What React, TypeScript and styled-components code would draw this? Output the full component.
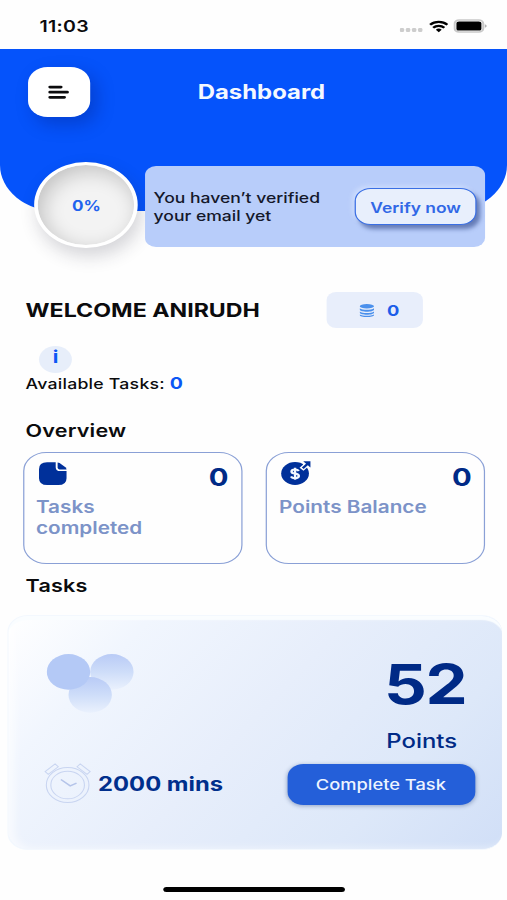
import React from "react";
import styled, { createGlobalStyle } from "styled-components";

const GlobalStyle = createGlobalStyle`
  *, *::before, *::after { box-sizing: border-box; }
  html, body { margin: 0; padding: 0; background: #fefefe; overflow: hidden; }
`;

const Screen = styled.main`
  width: 416px;
  height: 900px;
  transform: scaleX(1.21875);
  transform-origin: 0 0;
  display: flex;
  flex-direction: column;
  overflow: hidden;
  background: #fefefe;
  color: #0b0b0d;
  font-family: Inter, "Liberation Sans", sans-serif;
`;

const StatusBar = styled.div`
  flex: none;
  height: 49px;
  padding: 3px 16.5px 0 32.5px;
  display: flex;
  align-items: center;
  justify-content: space-between;
`;

const Time = styled.span`
  font-size: 16px;
  font-weight: 600;
  letter-spacing: 0.2px;
`;

const StatusIcons = styled.div`
  display: flex;
  align-items: center;
  gap: 4px;
`;

const Header = styled.header`
  flex: none;
  height: 162px;
  padding: 18px 18px 0 23px;
  border-radius: 0 0 46px 46px;
  background: #0553fb;
`;

const TopRow = styled.div`
  display: grid;
  grid-template-columns: 51px 1fr 51px;
  align-items: center;
  height: 50px;
`;

const MenuButton = styled.button`
  width: 51px;
  height: 50px;
  padding: 0 1px 0 0;
  border: 0;
  border-radius: 16px;
  background: #fff;
  display: flex;
  align-items: center;
  justify-content: center;
  box-shadow: 5px 7px 16px rgba(0, 20, 110, 0.3);
`;

const Title = styled.h1`
  margin: 0;
  padding: 0 0 1px 8px;
  text-align: center;
  color: #f4f8ff;
  font-size: 19.6px;
  line-height: 24px;
  font-weight: 700;
`;

const VerifyRow = styled.div`
  display: flex;
  align-items: center;
  gap: 6px;
  margin: 45px 0 0 5px;
`;

const Progress = styled.div`
  flex: none;
  width: 85px;
  height: 86px;
  padding-left: 1px;
  border: 3.5px solid #fff;
  border-radius: 50%;
  display: flex;
  align-items: center;
  justify-content: center;
  background: #f3f3f3;
  box-shadow: 3px 8px 16px rgba(40, 40, 60, 0.2), inset 4px 6px 18px rgba(0, 0, 0, 0.2);
  color: #1f62ee;
  font-size: 14px;
  font-weight: 700;
`;

const Banner = styled.div`
  width: 279px;
  height: 81px;
  margin-top: 2px;
  padding: 1px 7px 0;
  border-radius: 9px;
  background: #b8cdfa;
  display: flex;
  align-items: center;
  justify-content: space-between;
`;

const BannerText = styled.p`
  margin: 0;
  color: #14182a;
  font-size: 14.4px;
  line-height: 17.5px;
  font-weight: 500;
  white-space: nowrap;
`;

const VerifyButton = styled.button`
  width: 100px;
  height: 37px;
  padding: 1px 0 0;
  border: 1px solid #3a6fe4;
  border-radius: 13px;
  background: #e8effc;
  color: #3168e6;
  font: 600 14.3px Inter, sans-serif;
  white-space: nowrap;
  box-shadow: 3px 4px 4px rgba(50, 75, 140, 0.62), -2px -2px 5px rgba(220, 232, 255, 0.6);
`;

const WelcomeRow = styled.section`
  flex: none;
  height: 36px;
  margin-top: 81px;
  padding: 0 69px 0 21px;
  display: flex;
  align-items: center;
  justify-content: space-between;
`;

const Welcome = styled.h2`
  margin: 0;
  padding-top: 1px;
  font-size: 19px;
  line-height: 24px;
  font-weight: 700;
  white-space: nowrap;
`;

const CoinChip = styled.div`
  width: 79px;
  height: 36px;
  padding-left: 8px;
  border-radius: 8px;
  background: #e8eefb;
  color: #1c5de9;
  display: flex;
  align-items: center;
  justify-content: center;
  gap: 10px;
  font-size: 15px;
  font-weight: 700;
`;

const InfoBadge = styled.div`
  flex: none;
  width: 27px;
  height: 27px;
  margin: 18px 0 0 32px;
  border-radius: 50%;
  background: #e7eefa;
  color: #0c57f5;
  text-align: center;
  font-size: 17px;
  line-height: 22px;
  font-weight: 700;
`;

const Available = styled.p`
  flex: none;
  margin: 0 0 0 21px;
  height: 20px;
  font-size: 14.5px;
  line-height: 20px;
  font-weight: 500;
  letter-spacing: 0.2px;
`;

const AvailableCount = styled.b`
  color: #0c57f5;
  font-size: 16px;
  font-weight: 700;
`;

const SectionTitle = styled.h3<{ $gap: number }>`
  flex: none;
  margin: ${(p) => p.$gap}px 0 0 21px;
  font-size: 17.7px;
  line-height: 22px;
  font-weight: 600;
  letter-spacing: 0.15px;
`;

const Overview = styled.section`
  flex: none;
  display: grid;
  grid-template-columns: 180px 180px;
  gap: 19.5px;
  margin: 10px 0 0 18.5px;
`;

const StatCard = styled.article`
  height: 112px;
  padding: 9px 10px 0 10px;
  border: 1px solid #8aa0d6;
  border-radius: 19px;
`;

const StatTop = styled.div`
  display: flex;
  align-items: flex-start;
  justify-content: space-between;
  height: 35px;
`;

const StatValue = styled.strong`
  color: #002a86;
  font-size: 24px;
  line-height: 32px;
  font-weight: 700;
`;

const StatLabel = styled.p`
  margin: 0;
  width: 125px;
  color: #7c93c8;
  font-size: 17px;
  line-height: 21px;
  font-weight: 600;
`;

const TaskCard = styled.section`
  flex: none;
  width: 406px;
  height: 235px;
  margin: 18px 0 0 6px;
  padding: 31px 22px 0 31px;
  border: 1px solid #f3f8fe;
  border-width: 1px 0 1px 1px;
  border-radius: 17px;
  background: linear-gradient(128deg, #ffffff 0%, #f1f6fe 20%, #e7eefb 48%, #dde8f9 76%, #d1dff7 100%);
  box-shadow: inset 0 5px 1px -1px #fafdff, inset 5px 0 8px rgba(255, 255, 255, 0.6);
`;

const TaskTop = styled.div`
  height: 117px;
  display: flex;
  justify-content: space-between;
`;

const TaskBottom = styled.div`
  display: flex;
  align-items: center;
  justify-content: space-between;
  height: 41px;
`;

const Score = styled.div`
  width: 73px;
  color: #002a86;
`;

const ScoreValue = styled.div`
  margin-left: -2px;
  font-size: 55px;
  line-height: 74px;
  font-weight: 700;
  letter-spacing: -1px;
`;

const ScoreUnit = styled.div`
  font-size: 19.6px;
  line-height: 40px;
  font-weight: 500;
`;

const Duration = styled.div`
  display: flex;
  align-items: center;
  gap: 6px;
  margin: -2px 0 0 -2.5px;
  color: #002f8c;
  font-size: 19.5px;
  font-weight: 700;
  white-space: nowrap;
`;

const CompleteButton = styled.button`
  width: 154px;
  height: 41px;
  padding: 0 1px 0 0;
  border: 0;
  border-radius: 13px;
  background: #245fd9;
  color: #edf4ff;
  font: 500 15px Inter, sans-serif;
  box-shadow: 0 1px 4px rgba(30, 60, 120, 0.4);
`;

const HomeIndicator = styled.div`
  flex: none;
  width: 149px;
  height: 5px;
  margin: 37px 0 0 134px;
  border-radius: 3px;
  background: #000;
`;

const SignalIcon = () => (
  <svg width="19" height="5" viewBox="0 0 19 5" fill="#cdcdcd" transform="translate(-1 3)">
    {[0, 5, 10, 15].map((x) => (
      <rect key={x} x={x} y="1" width="3.6" height="4" rx="1.2" />
    ))}
  </svg>
);

const WifiIcon = () => (
  <svg width="16" height="13" viewBox="0 0 16 13" fill="none" stroke="#000" strokeWidth="2.1">
    <path d="M.9 4.8a10.2 10.2 0 0 1 14.2 0M3.4 7.7a6.6 6.6 0 0 1 9.2 0" />
    <path d="M5.6 9.7a3.5 3.5 0 0 1 4.8 0L8 12.2z" fill="#000" stroke="none" />
  </svg>
);

const BatteryIcon = () => (
  <svg width="28" height="14" viewBox="0 0 28 14">
    <rect x="1" y="1" width="23.5" height="12" rx="3.6" fill="#fff" stroke="#c9c9c9" strokeWidth="1.7" />
    <rect x="2.5" y="2.4" width="20.5" height="9.2" rx="2.2" fill="#000" />
    <path d="M25.8 5.2q1.6.5 1.6 1.8t-1.6 1.8z" fill="#b4b4b4" />
  </svg>
);

const MenuIcon = () => (
  <svg width="18" height="14" viewBox="0 0 18 14" stroke="#0b0b0d" strokeWidth="2.7" strokeLinecap="round">
    <path d="M2 2.1h9M2 7.2h14.2M2 12.3h11.8" />
  </svg>
);

const CoinsIcon = () => (
  <svg width="12" height="13" viewBox="0 0 12 13" fill="#4b90ec">
    <ellipse cx="6" cy="2.3" rx="5.9" ry="2.2" />
    <path d="M.1 4.3C2.5 6.3 9.5 6.3 11.9 4.3v1.3c0 3-11.8 3-11.8 0z" />
    <path d="M.1 7.4C2.5 9.4 9.5 9.4 11.9 7.4v1.2c0 3-11.8 3-11.8 0z" />
    <path d="M.1 10.4C2.5 12.2 9.5 12.2 11.9 10.4v.5c0 2.8-11.8 2.8-11.8 0z" />
  </svg>
);

const NoteIcon = () => (
  <svg width="28" height="26" viewBox="0 0 28 26" fill="#00309a">
    <path d="M8.6.3h7.1v4.9q0 3.9 3.9 3.9h5v7.1q0 6.9-6.8 6.9H8.8q-6.8 0-6.8-6.9V7.2Q2 .3 8.6.3z" />
    <path d="M17.3.4q.9.1 1.6.7l4.8 4.2q.8.8.9 2.2h-4.8q-2.5 0-2.5-2.3z" />
  </svg>
);

const PointsIcon = () => (
  <svg width="28" height="26" viewBox="0 0 28 26" overflow="visible">
    <circle cx="13.1" cy="11.5" r="11.4" fill="#00309a" />
    <path d="M18.4 7.2l6.2-6.6M19.6.3h5.2v5.4" fill="none" stroke="#fdfeff" strokeWidth="4.4" />
    <path d="M19.4 6.2l5-5.4" fill="none" stroke="#00309a" strokeWidth="2" />
    <path d="M19.8-.8h5.9v6.2z" fill="#00309a" />
    <path
      d="M16.2 9q-1-1.6-3.1-1.6-2.9 0-2.9 2 0 1.8 2.9 2.2 3.1.5 3.1 2.5 0 2.1-3.1 2.1-2.4 0-3.4-1.8M13.1 5.7v12"
      fill="none"
      stroke="#f2f7ff"
      strokeWidth="2"
    />
  </svg>
);

const Bubbles = () => (
  <svg width="73" height="66" viewBox="0 0 73 66">
    <defs>
      <linearGradient id="bubble" x1="0" y1="0" x2="0" y2="1">
        <stop offset="0" stopColor="#b9cbf6" />
        <stop offset="0.5" stopColor="#ceddf9" />
        <stop offset="1" stopColor="#eaf1fd" />
      </linearGradient>
    </defs>
    <circle cx="53.8" cy="24.9" r="17.8" fill="url(#bubble)" />
    <circle cx="36" cy="47.9" r="17.8" fill="url(#bubble)" />
    <circle cx="18.2" cy="24.9" r="17.8" fill="#b4c9f6" />
  </svg>
);

const ClockIcon = () => (
  <svg width="39" height="41" viewBox="0 0 39 41" fill="none" stroke="#c9d5f1" strokeWidth="0.9">
    <circle cx="19.5" cy="22" r="17.5" />
    <circle cx="19.5" cy="22" r="13.8" />
    <path d="M1 8.6 9.2 1l2.6 2.8-8.2 7.6zM27.2 3.8 29.8 1 38 8.6l-2.6 2.8z" />
    <path d="M14 16.5l7.6 6.3 5.2-2.6" stroke="#b5c4e9" strokeWidth="1.4" />
  </svg>
);

export default function App() {
  return (
    <>
      <GlobalStyle />
      <Screen>
        <StatusBar>
          <Time>11:03</Time>
          <StatusIcons>
            <SignalIcon />
            <WifiIcon />
            <BatteryIcon />
          </StatusIcons>
        </StatusBar>

        <Header>
          <TopRow>
            <MenuButton aria-label="Menu">
              <MenuIcon />
            </MenuButton>
            <Title>Dashboard</Title>
          </TopRow>
          <VerifyRow>
            <Progress>0%</Progress>
            <Banner>
              <BannerText>
                You haven’t verified
                <br />
                your email yet
              </BannerText>
              <VerifyButton>Verify now</VerifyButton>
            </Banner>
          </VerifyRow>
        </Header>

        <WelcomeRow>
          <Welcome>WELCOME ANIRUDH</Welcome>
          <CoinChip>
            <CoinsIcon />
            <span>0</span>
          </CoinChip>
        </WelcomeRow>

        <InfoBadge>i</InfoBadge>
        <Available>
          Available Tasks: <AvailableCount>0</AvailableCount>
        </Available>

        <SectionTitle $gap={27}>Overview</SectionTitle>
        <Overview>
          <StatCard>
            <StatTop>
              <NoteIcon />
              <StatValue>0</StatValue>
            </StatTop>
            <StatLabel>Tasks completed</StatLabel>
          </StatCard>
          <StatCard>
            <StatTop>
              <PointsIcon />
              <StatValue>0</StatValue>
            </StatTop>
            <StatLabel>Points Balance</StatLabel>
          </StatCard>
        </Overview>

        <SectionTitle $gap={11}>Tasks</SectionTitle>
        <TaskCard>
          <TaskTop>
            <Bubbles />
            <Score>
              <ScoreValue>52</ScoreValue>
              <ScoreUnit>Points</ScoreUnit>
            </Score>
          </TaskTop>
          <TaskBottom>
            <Duration>
              <ClockIcon />
              2000 mins
            </Duration>
            <CompleteButton>Complete Task</CompleteButton>
          </TaskBottom>
        </TaskCard>
        <HomeIndicator />
      </Screen>
    </>
  );
}
